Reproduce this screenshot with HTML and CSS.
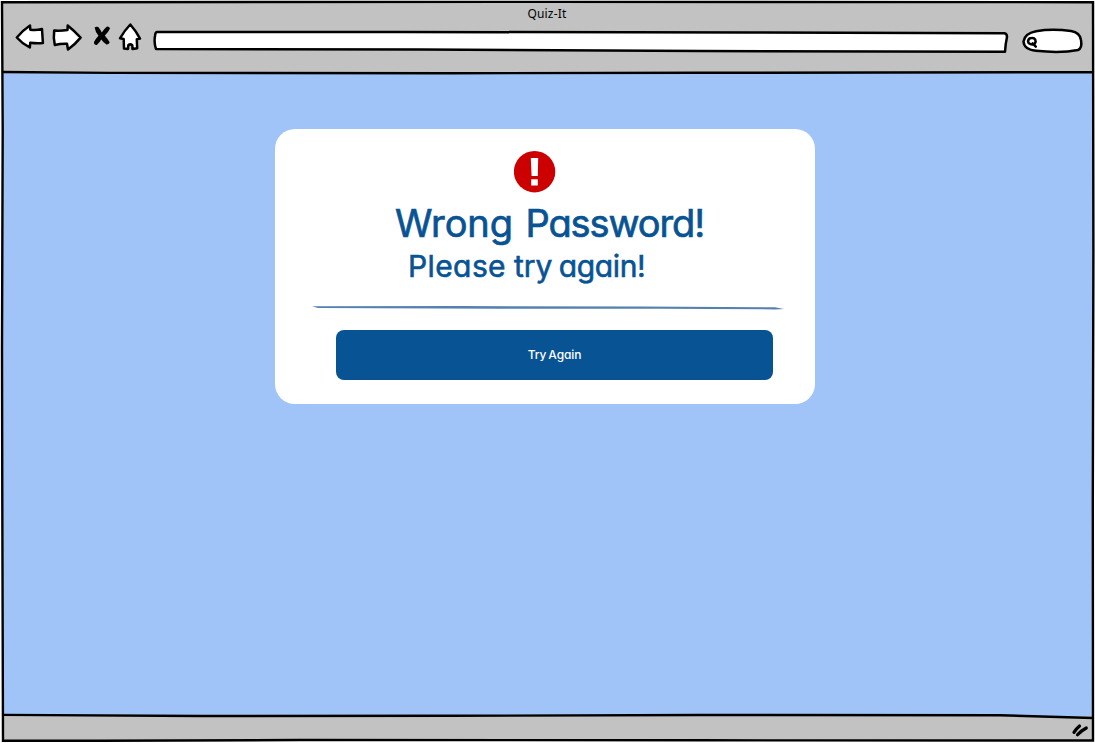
FILE: index.html
```html
<!DOCTYPE html>
<html lang="en">
<head>
<meta charset="utf-8">
<title>Quiz-It</title>
<link rel="stylesheet" href="styles.css">
</head>
<body>
<div class="window">
  <header class="browser-bar">
    <div class="title">Quiz-It</div>
    <div class="toolbar">
      <svg class="nav-icons" width="135" height="36" viewBox="10 20 135 36">
        <path class="ink" d="M16.800 37.500Q22.500 30.500 30 25.500L30.300 29.700Q36 30.500 42 29L42.900 43Q36 43.500 30.300 42.700L29.800 47.500Q22 43.500 16.800 37.500Z"/>
        <path class="ink" d="M54.200 30.500Q60.500 31 67.500 30L67.700 25.500Q74.500 31 80.600 37.600Q75 44.500 68 49.500L67 43.800Q61 43.500 54.800 45Q53.200 38 54.200 30.500Z"/>
        <path class="cross" d="M94.600 27.500Q96.500 26.200 98.300 27Q100.500 29.800 101.800 32.500Q104 29 107 26.600Q109.500 26.500 110 28.500Q108.500 32 104.800 35.600Q107.500 39 109.700 42.200Q108.800 44.800 106.400 44.600Q103.500 42.500 101.300 39.400Q99.500 42.500 96.800 45Q93.800 45.200 94 42Q95.500 39 98.500 35.800Q95.200 31.500 94.600 27.500Z"/>
        <path class="ink" d="M130.300 24.500Q136 31 140 38.600L136.800 39.300L137.200 48.300L132.500 49.100L132.300 45.200Q130.200 43.500 128.300 45.200L128 49L124 48.600L123.700 39L120 38.300Q124.500 30.500 130.300 24.500Z"/>
      </svg>
      <svg class="address" width="860" height="30" viewBox="151 27 860 30">
        <path class="ink" d="M157 32Q155.500 31.700 155 36Q153.800 43 156 49L420 49.500L700 51L1005 51.800Q1005.600 43 1007 37Q1007 33.500 1004.500 33.300L750 32.400L400 32Z"/>
      </svg>
      <svg class="search" width="66" height="30" viewBox="1019 26 66 30">
        <path class="ink" d="M1036 31.200Q1052 28.600 1071 31Q1080 32.500 1081 40Q1082.500 48 1078 50Q1061 53.300 1036 50.800Q1024 49.500 1023.500 41.500Q1024.500 33.500 1036 31.200Z"/>
        <path class="lens" d="M1031.600 38C1035.200 37.500 1036.600 41 1034.800 43.600C1032 45.500 1028.200 44 1028 41.300C1028.300 39 1030 38 1031.600 38ZM1032.600 43.400L1035.800 46.700"/>
      </svg>
    </div>
  </header>
  <main class="page">
    <section class="card">
      <svg class="alert" width="42" height="42" viewBox="0 0 42 42">
        <circle cx="20.600" cy="20.700" r="20.700"/>
        <path d="M16.800 7H24.200L23.800 25H17.600ZM17.200 28.300H23.800V34.600H17.200Z"/>
      </svg>
      <h1 class="headline">Wrong <span class="tight">Password!</span></h1>
      <p class="subline"><span class="loose">Please</span> try <span class="snug">again!</span></p>
      <svg class="divider" width="472" height="5" viewBox="312 305 472 5">
        <path d="M312 306.200L460 306L640 306.500L775 307.300L784 309L775 309.400L660 308.800L500 308.800L318 308Z"/>
      </svg>
      <button class="retry" type="button">Try Again</button>
    </section>
  </main>
  <footer class="status-bar">
    <svg class="grip" width="20" height="16" viewBox="1072 723 20 16">
      <path d="M1075 732.300Q1077 729 1080.500 726M1078.500 734.800Q1082 730.800 1087.300 728"/>
    </svg>
  </footer>
  <svg class="frame" width="1095" height="743" viewBox="0 0 1095 743">
    <path d="M2 2.200L550 1.900L1093 2.200L1093.400 250L1092.800 500L1093 740.500L700 740.300L300 740L100 740.800L3 740.800L2.300 500L2 350L2.700 130Z"/>
    <path d="M3 72L110 72.900L450 73.200L700 72.800L1093 72.200M3 714.900L200 716L450 715.800L700 715L1000 715.200L1093 718"/>
  </svg>
</div>
</body>
</html>
```
FILE: styles.css
```css
* {
  box-sizing: border-box;
}

body {
  margin: 0;
  background: #fff;
  font-family: Inter, "Open Sans", sans-serif;
  font-feature-settings: "cv11" 1;
  overflow: hidden;
}

.window {
  position: relative;
  display: flex;
  flex-direction: column;
  width: 1095px;
  height: 743px;
  padding: 1px 2px 2px;
}

.browser-bar {
  flex: 0 0 72px;
  background: #c2c2c2;
}

.title {
  height: 19px;
  padding-top: 4px;
  padding-right: 1px;
  color: #000;
  font-family: "Noto Sans", sans-serif;
  font-size: 12px;
  letter-spacing: 0.2px;
  line-height: 18px;
  text-align: center;
}

.toolbar {
  display: flex;
  align-items: flex-start;
  padding-left: 8px;
}

.address {
  margin: 7px 8px 0 6px;
}

.search {
  margin-top: 6px;
}

.ink {
  fill: #fff;
  stroke: #000;
  stroke-width: 2.5;
  stroke-linejoin: round;
}

.cross {
  fill: #000;
}

.lens {
  fill: none;
  stroke: #000;
  stroke-width: 2.5;
  stroke-linecap: round;
}

.page {
  flex: 1;
  padding: 56px 0 0 273px;
  background: #a0c4f8;
}

.card {
  display: flex;
  flex-direction: column;
  width: 540px;
  height: 275px;
  padding-top: 22px;
  border-radius: 20px;
  background: #fff;
  color: #085394;
  white-space: nowrap;
}

.alert {
  margin-left: 239px;
  fill: #cc0000;
}

.alert path {
  fill: #fff;
}

.headline {
  height: 48px;
  margin: 6px 0 0 120px;
  font-size: 38px;
  font-weight: 400;
  letter-spacing: -0.1px;
  line-height: 48px;
  word-spacing: 2px;
  -webkit-text-stroke: 0.7px #085394;
}

.tight {
  letter-spacing: -1.1px;
}

.subline {
  height: 38px;
  margin: 0 0 0 133px;
  font-size: 30px;
  font-weight: 400;
  line-height: 38px;
  word-spacing: -0.5px;
  -webkit-text-stroke: 0.6px #085394;
}

.loose {
  letter-spacing: 0.4px;
}

.snug {
  margin-left: -1.5px;
  letter-spacing: -0.4px;
}

.divider {
  margin: 20px 0 0 37px;
  fill: #5680b0;
}

.retry {
  width: 437px;
  height: 50px;
  margin: 20px 0 0 61px;
  padding: 0;
  border: 0;
  border-radius: 8px;
  background: #085394;
  color: #fff;
  font: 500 12px/50px Inter, sans-serif;
  font-feature-settings: "cv11" 1;
  letter-spacing: -0.1px;
  word-spacing: -1px;
}

.status-bar {
  display: flex;
  flex: 0 0 25px;
  justify-content: flex-end;
  padding: 7px 2px 0 0;
  background: #c2c2c2;
}

.grip {
  fill: none;
  stroke: #000;
  stroke-width: 3.2;
  stroke-linecap: round;
}

.frame {
  position: absolute;
  inset: 0;
  fill: none;
  stroke: #000;
  stroke-width: 2.4;
  pointer-events: none;
}
```
